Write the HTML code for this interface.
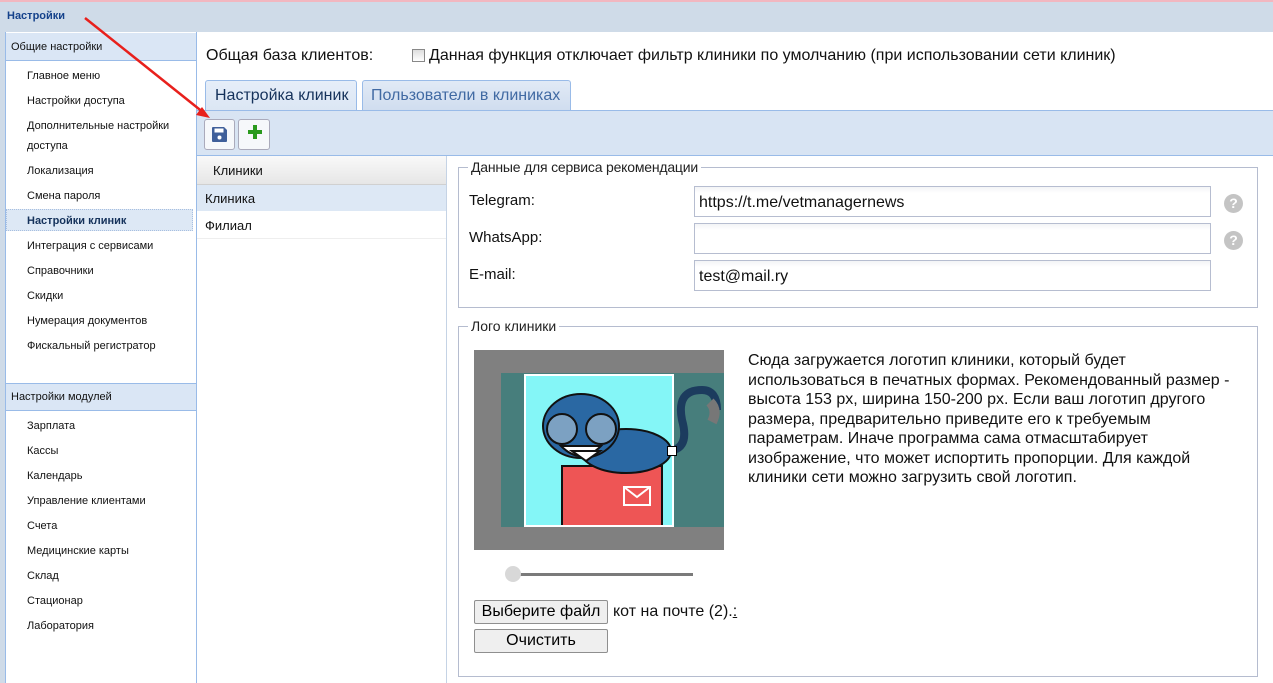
<!DOCTYPE html>
<html><head><meta charset="utf-8"><style>
*{box-sizing:border-box;margin:0;padding:0}
body{width:1273px;height:683px;overflow:hidden;background:#fff;font-family:"Liberation Sans","DejaVu Sans",sans-serif;position:relative;color:#000}
.a{position:absolute}
.mi{position:absolute;left:27px;font-size:11px;color:#111}
.in{position:absolute;left:694px;width:517px;height:31px;border:1px solid #b6bdd0;background:linear-gradient(#f3f4f6,#fff 6px);font-size:16px;padding:7px 4px;color:#111}
.lb{position:absolute;left:469px;font-size:15px;color:#111}
.help{position:absolute;left:1224px;width:19px;height:19px;border-radius:50%;background:#c4c4c4;color:#fff;font-weight:bold;font-size:14px;text-align:center;line-height:19px}
.btn{position:absolute;left:474px;width:134px;height:24px;border:1px solid #8f8f8f;border-radius:2px;background:#efefef;font-size:16px;text-align:center;line-height:22px}
.ft{position:absolute;font-size:16px;line-height:19.5px;color:#111}
</style></head><body>
<div class="a" style="left:0;top:0;width:1273px;height:2px;background:#f2b7c0"></div>
<div class="a" style="left:0;top:2px;width:1273px;height:30px;background:#cfdbe8"></div>
<div class="a" style="left:7px;top:10px;font-size:11px;font-weight:bold;color:#15428b">Настройки</div>
<div class="a" style="left:0;top:32px;width:5px;height:651px;background:#cfdbe8"></div>
<div class="a" style="left:5px;top:32px;width:192px;height:651px;border-right:1px solid #99bbe8;border-left:1px solid #99bbe8"></div>
<div class="a" style="left:6px;top:33px;width:190px;height:28px;background:#dae6f5;border-bottom:1px solid #99bbe8"></div>
<div class="a" style="left:11px;top:41px;font-size:11px;color:#111">Общие настройки</div>
<div class="mi" style="top:70px">Главное меню</div>
<div class="mi" style="top:95px">Настройки доступа</div>
<div class="mi" style="top:120px">Дополнительные настройки</div>
<div class="mi" style="top:140px">доступа</div>
<div class="mi" style="top:165px">Локализация</div>
<div class="mi" style="top:190px">Смена пароля</div>
<div class="a" style="left:6px;top:209px;width:187px;height:22px;background:#dde8f5;border:1px dotted #a8bfe0"></div>
<div class="mi" style="top:215px;font-weight:bold;color:#15325b">Настройки клиник</div>
<div class="mi" style="top:240px">Интеграция с сервисами</div>
<div class="mi" style="top:265px">Справочники</div>
<div class="mi" style="top:290px">Скидки</div>
<div class="mi" style="top:315px">Нумерация документов</div>
<div class="mi" style="top:340px">Фискальный регистратор</div>
<div class="a" style="left:6px;top:383px;width:190px;height:28px;background:#dae6f5;border-top:1px solid #99bbe8;border-bottom:1px solid #99bbe8"></div>
<div class="a" style="left:11px;top:391px;font-size:11px;color:#111">Настройки модулей</div>
<div class="mi" style="top:420px">Зарплата</div>
<div class="mi" style="top:445px">Кассы</div>
<div class="mi" style="top:470px">Календарь</div>
<div class="mi" style="top:495px">Управление клиентами</div>
<div class="mi" style="top:520px">Счета</div>
<div class="mi" style="top:545px">Медицинские карты</div>
<div class="mi" style="top:570px">Склад</div>
<div class="mi" style="top:595px">Стационар</div>
<div class="mi" style="top:620px">Лаборатория</div>

<div class="a" style="left:206px;top:47px;font-size:16px;color:#111">Общая база клиентов:</div>
<div class="a" style="left:412px;top:49px;width:13px;height:13px;border:1px solid #888;background:linear-gradient(#ddd,#fff)"></div>
<div class="a" style="left:429px;top:47px;font-size:16px;color:#111">Данная функция отключает фильтр клиники по умолчанию (при использовании сети клиник)</div>

<div class="a" style="left:205px;top:80px;width:152px;height:31px;border:1px solid #99bbe8;border-bottom:none;border-radius:3px 3px 0 0;background:linear-gradient(#e6eef9,#dbe6f4)"></div>
<div class="a" style="left:215px;top:87px;font-size:16px;color:#15325b">Настройка клиник</div>
<div class="a" style="left:362px;top:80px;width:209px;height:30px;border:1px solid #99bbe8;border-bottom:none;border-radius:3px 3px 0 0;background:linear-gradient(#e1eaf6,#d0ddef)"></div>
<div class="a" style="left:371px;top:87px;font-size:16px;color:#416aa3">Пользователи в клиниках</div>
<div class="a" style="left:197px;top:110px;width:1076px;height:46px;background:#d8e4f3;border-top:1px solid #99bbe8;border-bottom:1px solid #99bbe8"></div>
<div class="a" style="left:204px;top:119px;width:31px;height:31px;border:1px solid #aab;border-radius:3px;background:#f6f8fb"></div>
<svg class="a" style="left:211px;top:126px" width="17" height="17" viewBox="0 0 17 17"><path d="M1 2a1 1 0 0 1 1-1h11l3 3v11a1 1 0 0 1-1 1H2a1 1 0 0 1-1-1z" fill="#3f5f9a"/><rect x="3.5" y="2.5" width="9" height="4" fill="#fff"/><circle cx="8.5" cy="11.5" r="2" fill="#fff"/></svg>
<div class="a" style="left:238px;top:119px;width:32px;height:31px;border:1px solid #aab;border-radius:3px;background:#f6f8fb"></div>
<div class="a" style="left:248px;top:130px;width:14px;height:4px;background:#2a9a1e"></div>
<div class="a" style="left:253px;top:125px;width:4px;height:14px;background:#2a9a1e"></div>

<div class="a" style="left:197px;top:156px;width:250px;height:527px;border-right:1px solid #c5d3e5"></div>
<div class="a" style="left:197px;top:156px;width:249px;height:29px;background:linear-gradient(#f9f9f9,#e6e6e6);border-bottom:1px solid #d0d0d0"></div>
<div class="a" style="left:213px;top:163px;font-size:13px;color:#111">Клиники</div>
<div class="a" style="left:197px;top:185px;width:249px;height:26px;background:#dde8f5"></div>
<div class="a" style="left:205px;top:191px;font-size:13px;color:#111">Клиника</div>
<div class="a" style="left:197px;top:211px;width:249px;height:28px;border-bottom:1px solid #eee"></div>
<div class="a" style="left:205px;top:218px;font-size:13px;color:#111">Филиал</div>

<div class="a" style="left:458px;top:167px;width:800px;height:141px;border:1px solid #b5bccf"></div>
<div class="a" style="left:468px;top:159px;padding:0 3px;background:#fff;font-size:14px;color:#222;letter-spacing:-0.2px">Данные для сервиса рекомендации</div>
<div class="lb" style="top:192px">Telegram:</div>
<div class="in" style="top:186px">https://t.me/vetmanagernews</div>
<div class="help" style="top:194px">?</div>
<div class="lb" style="top:229px">WhatsApp:</div>
<div class="in" style="top:223px"></div>
<div class="help" style="top:231px">?</div>
<div class="lb" style="top:266px">E-mail:</div>
<div class="in" style="top:260px">test@mail.ry</div>

<div class="a" style="left:458px;top:326px;width:800px;height:351px;border:1px solid #b5bccf"></div>
<div class="a" style="left:468px;top:318px;padding:0 3px;background:#fff;font-size:14px;color:#222">Лого клиники</div>
<div class="a" style="left:474px;top:350px;width:250px;height:200px;background:#808080"></div>
<div class="a" style="left:501px;top:373px;width:223px;height:154px;background:#477e7c"></div>
<div class="a" style="left:524px;top:374px;width:150px;height:153px;background:#84f6f7;border:2px solid #fff;overflow:hidden">
<svg width="146" height="149" viewBox="0 0 146 149">
<rect x="36" y="90" width="100" height="62" fill="#ee5555" stroke="#111" stroke-width="2"/>
<rect x="98" y="111" width="26" height="18" fill="none" stroke="#fff" stroke-width="2"/>
<path d="M98 111l13 10 13-10" fill="none" stroke="#fff" stroke-width="2"/>
<ellipse cx="100" cy="75" rx="45" ry="22" fill="#2a68a3" stroke="#111" stroke-width="2"/>
<ellipse cx="55" cy="50" rx="38" ry="32" fill="#2a68a3" stroke="#111" stroke-width="2"/>
<path d="M35 70q20 20 40 0z" fill="#fff" stroke="#111" stroke-width="2"/>
<circle cx="36" cy="53" r="15" fill="#9fb9cf" fill-opacity=".7" stroke="#111" stroke-width="2"/>
<circle cx="75" cy="53" r="15" fill="#9fb9cf" fill-opacity=".7" stroke="#111" stroke-width="2"/>
<path d="M46 75l14 10 14-10z" fill="#fff" stroke="#111" stroke-width="2"/>
</svg></div>
<svg class="a" style="left:674px;top:380px" width="50" height="80" viewBox="0 0 50 80"><path d="M0 70q15-5 8-30q-6-30 20-30q15 0 15 20" fill="none" stroke="#1c3c5e" stroke-width="8"/><path d="M36 22q8 8 2 20" fill="none" stroke="#777" stroke-width="10"/></svg>
<div class="a" style="left:667px;top:446px;width:10px;height:10px;background:#fff;border:1px solid #000"></div>
<div class="a" style="left:506px;top:573px;width:187px;height:3px;background:#7a7a7a"></div>
<div class="a" style="left:505px;top:566px;width:16px;height:16px;border-radius:50%;background:#d8d8d8"></div>
<div class="ft" style="left:748px;top:351px;width:500px">Сюда загружается логотип клиники, который будет<br>использоваться в печатных формах. Рекомендованный размер -<br>высота 153 px, ширина 150-200 px. Если ваш логотип другого<br>размера, предварительно приведите его к требуемым<br>параметрам. Иначе программа сама отмасштабирует<br>изображение, что может испортить пропорции. Для каждой<br>клиники сети можно загрузить свой логотип.</div>
<div class="btn" style="top:600px">Выберите файл</div>
<div class="ft" style="left:613px;top:602px">кот на почте (2).<u>:</u></div>
<div class="btn" style="top:629px">Очистить</div>

<svg class="a" style="left:0;top:0" width="260" height="140"><line x1="85" y1="18" x2="204" y2="113" stroke="#e8201c" stroke-width="2.5"/><path d="M210 118l-14-3 6-8z" fill="#e8201c"/></svg>
</body></html>
